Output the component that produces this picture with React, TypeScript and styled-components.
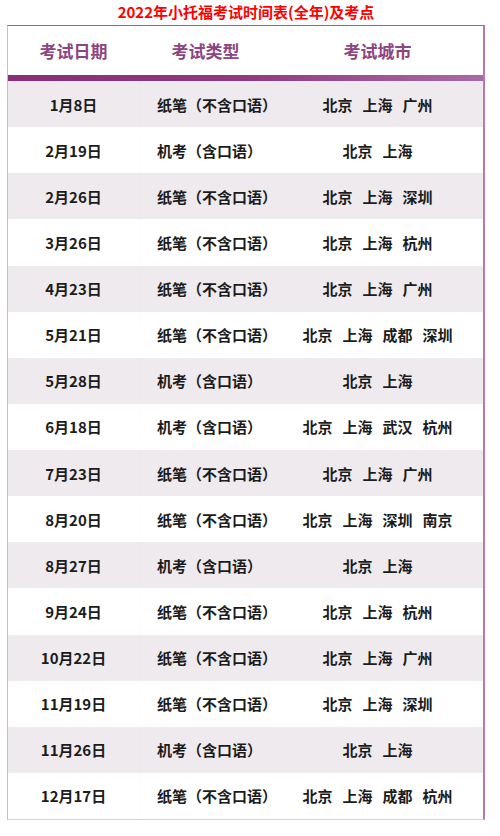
import React from "react";
import styled, { createGlobalStyle } from "styled-components";

const GlobalStyle = createGlobalStyle`
  html, body {
    margin: 0;
    padding: 0;
    background: #ffffff;
  }
  body {
    font-family: "Noto Sans CJK SC", "Noto Sans", sans-serif;
  }
`;

const Page = styled.div`
  width: 478px;
  margin-left: 7px;
  display: flex;
  flex-direction: column;
`;

const Title = styled.h1`
  margin: 0;
  height: 25px;
  font-size: 15px;
  line-height: 24px;
  font-weight: 700;
  color: #ff0000;
  text-align: center;
`;

const Table = styled.div`
  display: flex;
  flex-direction: column;
  border-top: 1px solid #a45d9c;
  border-left: 1px solid #d7b3d3;
  border-right: 2px solid #b57ab0;
  border-bottom: 1px solid #e6c8e3;
`;

const Columns = `
  display: grid;
  grid-template-columns: 131px 133px 1fr;
`;

const HeaderRow = styled.div`
  ${Columns}
  height: 49px;
  background: #ffffff;
`;

const HeaderCell = styled.div`
  display: flex;
  align-items: center;
  justify-content: center;
  font-size: 17px;
  font-weight: 700;
  color: #8c4483;
`;

const Bar = styled.div`
  height: 6px;
  background: linear-gradient(90deg, #882d78 0%, #8f3a80 50%, #a86aa6 100%);
`;

const Body = styled.div`
  display: grid;
  grid-template-rows: repeat(16, 1fr);
  height: 738px;
`;

const Row = styled.div<{ $shaded: boolean }>`
  ${Columns}
  background: ${(p) => (p.$shaded ? "#eeeaee" : "#ffffff")};
  font-size: 15px;
  font-weight: 700;
  color: #1c1c1c;
`;

const DateCell = styled.div`
  display: flex;
  align-items: center;
  justify-content: center;
`;

const TypeCell = styled.div`
  display: flex;
  align-items: center;
  padding-left: 17px;
  border-left: 1px solid rgba(120, 90, 120, 0.025);
`;

const CityCell = styled.div`
  display: flex;
  align-items: center;
  justify-content: center;
  gap: 10px;
`;

type Exam = { date: string; type: string; cities: string[] };

const PAPER = "纸笔（不含口语）";
const PC = "机考（含口语）";

const exams: Exam[] = [
  { date: "1月8日", type: PAPER, cities: ["北京", "上海", "广州"] },
  { date: "2月19日", type: PC, cities: ["北京", "上海"] },
  { date: "2月26日", type: PAPER, cities: ["北京", "上海", "深圳"] },
  { date: "3月26日", type: PAPER, cities: ["北京", "上海", "杭州"] },
  { date: "4月23日", type: PAPER, cities: ["北京", "上海", "广州"] },
  { date: "5月21日", type: PAPER, cities: ["北京", "上海", "成都", "深圳"] },
  { date: "5月28日", type: PC, cities: ["北京", "上海"] },
  { date: "6月18日", type: PC, cities: ["北京", "上海", "武汉", "杭州"] },
  { date: "7月23日", type: PAPER, cities: ["北京", "上海", "广州"] },
  { date: "8月20日", type: PAPER, cities: ["北京", "上海", "深圳", "南京"] },
  { date: "8月27日", type: PC, cities: ["北京", "上海"] },
  { date: "9月24日", type: PAPER, cities: ["北京", "上海", "杭州"] },
  { date: "10月22日", type: PAPER, cities: ["北京", "上海", "广州"] },
  { date: "11月19日", type: PAPER, cities: ["北京", "上海", "深圳"] },
  { date: "11月26日", type: PC, cities: ["北京", "上海"] },
  { date: "12月17日", type: PAPER, cities: ["北京", "上海", "成都", "杭州"] },
];

export default function App() {
  return (
    <>
      <GlobalStyle />
      <Page>
        <Title>2022年小托福考试时间表(全年)及考点</Title>
        <Table>
          <HeaderRow>
            <HeaderCell>考试日期</HeaderCell>
            <HeaderCell>考试类型</HeaderCell>
            <HeaderCell>考试城市</HeaderCell>
          </HeaderRow>
          <Bar />
          <Body>
            {exams.map((e, i) => (
              <Row key={e.date} $shaded={i % 2 === 0}>
                <DateCell>{e.date}</DateCell>
                <TypeCell>{e.type}</TypeCell>
                <CityCell>
                  {e.cities.map((c) => (
                    <span key={c}>{c}</span>
                  ))}
                </CityCell>
              </Row>
            ))}
          </Body>
        </Table>
      </Page>
    </>
  );
}
